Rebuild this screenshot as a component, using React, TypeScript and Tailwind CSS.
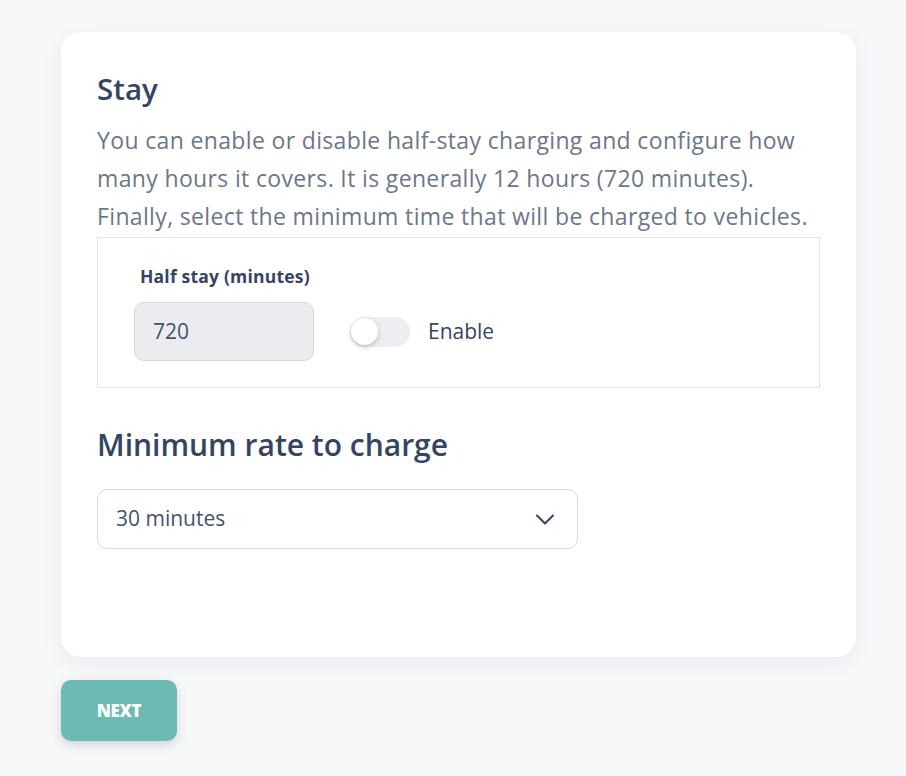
import React, { useState } from 'react';

const font = { fontFamily: '"Open Sans", "Noto Sans", sans-serif' };

const Chevron: React.FC = () => (
  <svg width="24" height="24" viewBox="0 0 24 24" fill="none" stroke="#344563" strokeWidth="2" strokeLinecap="round" strokeLinejoin="round">
    <path d="M4 8.5l8 8 8-8" />
  </svg>
);

export default function App() {
  const [enabled, setEnabled] = useState(false);

  return (
    <div className="min-h-screen bg-[#f7f8fa] px-[61px] pt-[32px] pb-8" style={font}>
      <div className="w-[795px] rounded-[20px] bg-white px-[36px] pt-[39px] pb-[108px] shadow-[0_6px_24px_rgba(30,40,60,0.06)]">
        <h1 className="text-[29.5px] leading-[36px] font-semibold text-[#344563]">Stay</h1>
        <p className="mt-[14px] text-[23px] leading-[38px] tracking-[0.35px] text-[#6b778c]">
          You can enable or disable half-stay charging and configure how many hours it covers. It is generally 12 hours (720 minutes). Finally, select the minimum time that will be charged to vehicles.
        </p>

        <div className="mt-[2px] border border-[#e2e3e6] px-[36px] pt-[26px] pb-[26px]">
          <div className="ml-[6px] text-[17.5px] leading-[24px] tracking-[0.2px] font-bold text-[#344563]">Half stay (minutes)</div>
          <div className="mt-[14px] flex items-center">
            <div className="flex h-[59px] w-[180px] items-center rounded-[10px] border border-[#d7d9dd] bg-[#ebecf0] pl-[18px] text-[21px] text-[#42526e]">
              720
            </div>
            <button
              onClick={() => setEnabled(!enabled)}
              className={`ml-[36px] flex h-[30px] w-[60px] items-center rounded-full ${enabled ? 'bg-[#6cbab3]' : 'bg-[#eceef1]'}`}
            >
              <span
                className={`h-[27px] w-[27px] rounded-full bg-white shadow-[0_2px_5px_rgba(0,0,0,0.22)] ${enabled ? 'ml-[32px]' : 'ml-[1px]'}`}
              />
            </button>
            <span className="ml-[18px] text-[21px] text-[#344563]">Enable</span>
          </div>
        </div>

        <h2 className="mt-[37px] text-[30px] leading-[40px] font-semibold text-[#344563]">Minimum rate to charge</h2>
        <div className="mt-[24px] flex h-[60px] w-[481px] items-center justify-between rounded-[10px] border border-[#d7d9dd] bg-white pl-[18px] pr-[20px] text-[21px] text-[#42526e]">
          <span>30 minutes</span>
          <Chevron />
        </div>
      </div>

      <button className="mt-[23px] flex h-[61px] w-[116px] items-center justify-center rounded-[10px] bg-[#6cbab3] text-[17px] font-extrabold tracking-[-0.3px] text-white shadow-[0_4px_12px_rgba(0,0,0,0.15)]">
        NEXT
      </button>
    </div>
  );
}
